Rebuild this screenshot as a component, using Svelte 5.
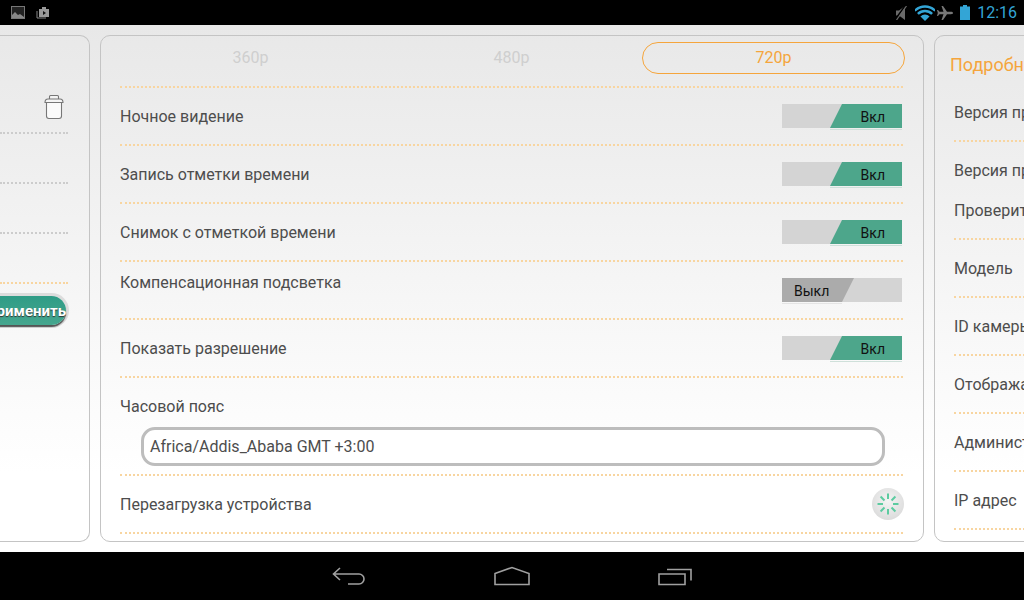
<script>
	const toggles = [
		{ label: 'Ночное видение', on: true },
		{ label: 'Запись отметки времени', on: true },
		{ label: 'Снимок с отметкой времени', on: true },
		{ label: 'Компенсационная подсветка', on: false, top: true },
		{ label: 'Показать разрешение', on: true }
	];
	const info = [
		{ label: 'Версия продукта' },
		{ label: 'Версия прошивки', short: true },
		{ label: 'Проверить обновление' },
		{ label: 'Модель' },
		{ label: 'ID камеры' },
		{ label: 'Отображаемое имя' },
		{ label: 'Администратор' },
		{ label: 'IP адрес' }
	];
</script>

<div class="screen">
	<div class="statusbar">
		<div class="notif">
			<svg width="14" height="14" viewBox="0 0 14 14">
				<rect x="0.5" y="0.500" width="13" height="12" fill="#222" stroke="#777" />
				<path d="M1 12V9l3-3 3 3 2-1 4 3v1z" fill="#888" />
			</svg>
			<svg width="14" height="14" viewBox="0 0 14 14">
				<path d="M1 5v7h9" fill="none" stroke="#888" />
				<path d="M3 3h3V1h4v2h3v8H3z" fill="#999" />
				<path d="M7 5l3 2-3 2z" fill="#111" />
			</svg>
		</div>
		<div class="status">
			<svg class="mute" width="12" height="14" viewBox="0 0 12 14">
				<path d="M1 4.500h3L10 0v14L4 9.500H1z" fill="#6a6a6a" />
				<path d="M0 14L10 0" stroke="#000" stroke-width="1.600" />
				<path d="M1.500 14L11.500 0" stroke="#6a6a6a" stroke-width="1.200" />
			</svg>
			<svg class="wifi" width="20" height="16" viewBox="0 0 20 16">
				<defs>
					<clipPath id="fan"><path d="M10 16L-4 2V-2H24V2z" /></clipPath>
				</defs>
				<g clip-path="url(#fan)" fill="none" stroke="#33a5d6" stroke-width="2.400">
					<circle cx="10" cy="16" r="14.500" />
					<circle cx="10" cy="16" r="10" />
					<circle cx="10" cy="16" r="6.500" fill="#33a5d6" stroke="none" />
				</g>
			</svg>
			<svg class="plane" width="16" height="14" viewBox="0 0 16 14">
				<path d="M16 7c0-.8-1-1.200-2-1.200H10L6 0H4.500l2 5.800H2.500L1 4H0l.8 3L0 10h1l1.500-1.800h4l-2 5.800H6l4-5.800h4c1 0 2-.4 2-1.200z" fill="#777" />
			</svg>
			<svg class="battery" width="10" height="15" viewBox="0 0 10 15">
				<path d="M3 0h4v1.500h3V15H0V1.500h3z" fill="#33a5d6" />
			</svg>
			<span class="clock">12:16</span>
		</div>
	</div>

	<div class="content">
		<section class="panel left">
			<div class="left-row">
				<svg class="trash" width="20" height="26" viewBox="0 0 20 26">
					<path d="M5.500 5V2.500c0-.8.5-1 1-1h7c.5 0 1 .2 1 1V5" fill="#f4f4f4" stroke="#777" stroke-width="1.100" />
					<path d="M2.500 9v13c0 1.500 1 2.500 2.500 2.500h10c1.500 0 2.500-1 2.500-2.500V9" fill="#fafafa" stroke="#777" stroke-width="1.100" />
					<path d="M1 8.500c0-2 1-3.500 3-3.500h12c2 0 3 1.500 3 3.500z" fill="#f4f4f4" stroke="#777" stroke-width="1.100" />
				</svg>
			</div>
			<div class="left-row"></div>
			<div class="left-row"></div>
			<div class="left-row orange"></div>
			<div class="apply"><button>Применить</button></div>
		</section>

		<section class="panel middle">
			<div class="tabs">
				<span class="tab">360p</span>
				<span class="tab">480p</span>
				<span class="tab active">720p</span>
			</div>
			{#each toggles as t}
				<div class="row" class:top={t.top}>
					<span class="label">{t.label}</span>
					{#if t.on}
						<div class="toggle on-state"><div class="fill on"><span>Вкл</span></div></div>
					{:else}
						<div class="toggle off-state"><div class="fill off"><span>Выкл</span></div></div>
					{/if}
				</div>
			{/each}
			<div class="tz">
				<span class="label">Часовой пояс</span>
				<div class="select">Africa/Addis_Ababa GMT +3:00</div>
			</div>
			<div class="row">
				<span class="label">Перезагрузка устройства</span>
				<div class="reboot">
					<svg width="24" height="24" viewBox="0 0 24 24">
						{#each [0, 45, 90, 135, 180, 225, 270, 315] as a}
							<path d="M12 1.500V7" stroke="#5ccba0" stroke-width="2" transform="rotate({a} 12 12)" />
						{/each}
					</svg>
				</div>
			</div>
		</section>

		<section class="panel right">
			<h2>Подробная информация</h2>
			{#each info as item}
				<div class="info" class:short={item.short}>{item.label}</div>
			{/each}
		</section>
	</div>

	<div class="navbar">
		<svg width="34" height="20" viewBox="0 0 34 20">
			<path d="M8 2L1.500 8 8 14M1.500 8H27a5 5 0 0 1 0 10H16" fill="none" stroke="#a0a0a0" stroke-width="1.600" />
		</svg>
		<svg width="36" height="20" viewBox="0 0 36 20">
			<path d="M1 7.500L18 1.500l17 6V18.500H1z" fill="none" stroke="#a0a0a0" stroke-width="1.600" />
		</svg>
		<svg width="34" height="20" viewBox="0 0 34 20">
			<path d="M1 8h26v10.500H1zM9 3.500h24v11" fill="none" stroke="#a0a0a0" stroke-width="1.600" />
		</svg>
	</div>
</div>

<style>
	:global(body) {
		margin: 0;
	}
	.screen {
		width: 1024px;
		height: 600px;
		display: flex;
		flex-direction: column;
		overflow: hidden;
		font-family: Roboto, sans-serif;
		color: #4d4d4d;
	}
	.statusbar {
		height: 25px;
		background: #000;
		display: flex;
		justify-content: space-between;
		align-items: center;
		padding: 0 7px 0 11px;
	}
	.notif {
		display: flex;
		gap: 11px;
	}
	.status {
		display: flex;
		align-items: center;
	}
	.wifi {
		margin-left: 8px;
	}
	.plane {
		margin-left: 2px;
	}
	.battery {
		margin-left: 7px;
	}
	.clock {
		color: #33a5d6;
		font-size: 16px;
		margin-left: 7px;
	}
	.content {
		height: 527px;
		box-sizing: border-box;
		padding-top: 10px;
		background: linear-gradient(#e8e8e8, #fff 85%);
		display: flex;
		gap: 10px;
	}
	.panel {
		height: 507px;
		box-sizing: border-box;
		border: 1px solid #c4c4c4;
		border-radius: 10px;
		overflow: hidden;
		flex: none;
	}
	.left {
		width: 90px;
		border-left: none;
		border-radius: 0 10px 10px 0;
		padding-top: 48px;
	}
	.left-row {
		height: 50px;
		margin-right: 21px;
		border-bottom: 2px dotted #ccc;
		box-sizing: border-box;
		display: flex;
		justify-content: flex-end;
	}
	.left-row.orange {
		border-bottom-color: #f8d5a0;
	}
	.trash {
		margin-right: 4px;
		margin-top: 10px;
	}
	.apply {
		display: flex;
		justify-content: flex-end;
		margin-right: 23px;
		margin-top: 12px;
	}
	.apply button {
		height: 29px;
		width: 80px;
		flex: none;
		border: none;
		border-radius: 15px;
		padding: 0;
		text-align: right;
		background: linear-gradient(#2f9c86, #46a68e);
		box-shadow: 0 2px 1px #555, 0 0 0 3px #dcdcdc;
		color: #fff;
		font: bold 15px Roboto, sans-serif;
		text-shadow: 0 1px 1px #333;
		white-space: nowrap;
	}
	.middle {
		width: 824px;
		padding: 0 20px 0 19px;
	}
	.tabs {
		height: 52px;
		box-sizing: border-box;
		padding-top: 6px;
		border-bottom: 2px dotted #f8d5a0;
		display: grid;
		grid-template-columns: repeat(3, 1fr);
	}
	.tab {
		height: 32px;
		text-align: center;
		font-size: 16px;
		line-height: 32px;
		color: #cfcfcf;
	}
	.tab.active {
		color: #f5a53c;
		border: 1px solid #f5a53c;
		border-radius: 16px;
		box-sizing: border-box;
		line-height: 30px;
		margin-right: -2px;
	}
	.row {
		height: 58px;
		box-sizing: border-box;
		border-bottom: 2px dotted #f8d5a0;
		display: flex;
		justify-content: space-between;
		align-items: center;
	}
	.row.top {
		align-items: flex-start;
		padding-top: 11px;
	}
	.row.top .toggle {
		margin-top: 5px;
	}
	.label {
		font-size: 16px;
	}
	.toggle {
		width: 120px;
		height: 24px;
		margin-right: 1px;
		background: #d4d4d4;
		position: relative;
		font-size: 14px;
		color: #111;
		line-height: 27px;
	}
	.toggle::after {
		content: '';
		position: absolute;
		bottom: -2px;
		height: 1px;
	}
	.toggle.on-state::after {
		right: 0;
		width: 72px;
		background: #cfe0da;
	}
	.toggle.off-state::after {
		left: 0;
		width: 60px;
		background: #e4e4e4;
	}
	.fill {
		position: absolute;
		top: 0;
		bottom: 0;
		width: 72px;
		box-sizing: border-box;
	}
	.fill.on {
		right: 0;
		background: #4da68b;
		clip-path: polygon(12px 0, 100% 0, 100% 100%, 0 100%);
		text-align: right;
		padding-right: 17px;
	}
	.fill.off {
		left: 0;
		background: #ababab;
		clip-path: polygon(0 0, 100% 0, 60px 100%, 0 100%);
		padding-left: 12px;
	}
	.tz {
		height: 98px;
		box-sizing: border-box;
		border-bottom: 2px dotted #f8d5a0;
		padding-top: 20px;
		line-height: 18px;
	}
	.select {
		margin: 11px 18px 0 21px;
		height: 39px;
		box-sizing: border-box;
		border: 3px solid #bdbdbd;
		border-radius: 14px;
		background: #fff;
		font-size: 16px;
		line-height: 34px;
		padding-left: 6px;
	}
	.reboot {
		width: 32px;
		height: 32px;
		margin-right: -1px;
		border-radius: 50%;
		background: radial-gradient(circle at 50% 40%, #f4f4f4, #d4d4d4);
		display: flex;
		align-items: center;
		justify-content: center;
	}
	.right {
		width: 200px;
		padding-left: 15px;
		white-space: nowrap;
	}
	h2 {
		margin: 0;
		height: 48px;
		line-height: 58px;
		font-size: 18px;
		font-weight: 400;
		color: #f5a53c;
	}
	.info {
		height: 58px;
		box-sizing: border-box;
		margin-left: 4px;
		padding-top: 20px;
		font-size: 16px;
		line-height: 18px;
		border-bottom: 2px dotted #f8d5a0;
	}
	.info.short {
		height: 40px;
		border-bottom: none;
	}
	.navbar {
		height: 48px;
		background: #000;
		display: flex;
		justify-content: center;
		align-items: center;
		gap: 128px;
	}
</style>
